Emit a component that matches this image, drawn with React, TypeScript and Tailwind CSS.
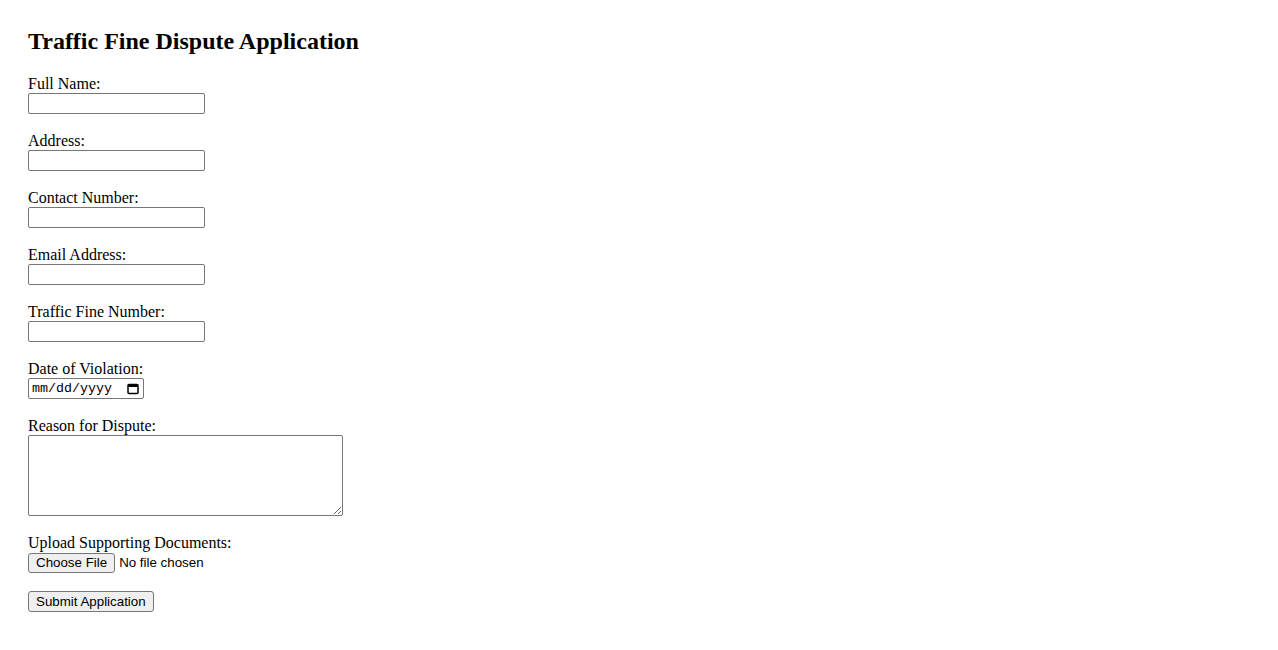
export default function App() {
  const fields = [
    { id: "fullName", label: "Full Name:" },
    { id: "address", label: "Address:" },
    { id: "contact", label: "Contact Number:" },
    { id: "email", label: "Email Address:" },
    { id: "fineNumber", label: "Traffic Fine Number:" },
  ];

  const control =
    "block border border-[#767676] rounded-[2px] bg-white px-[2px] py-px text-[13.33px] text-black font-['Liberation_Sans',Arial,sans-serif]";
  const button =
    "block border border-[#767676] rounded-[3px] bg-[#efefef] px-[7px] text-[13.33px] leading-[17px] text-black font-['Liberation_Sans',Arial,sans-serif]";

  return (
    <div className="min-h-[650px] bg-white px-[28px] pt-[27px] text-base text-black font-['Liberation_Serif','Times_New_Roman',serif]">
      <h2 className="mb-[20px] text-2xl leading-[28px] font-bold">Traffic Fine Dispute Application</h2>

      <form onSubmit={(e) => e.preventDefault()}>
        {fields.map((f) => (
          <div key={f.id} className="mb-[18px]">
            <label htmlFor={f.id} className="block leading-[18px]">
              {f.label}
            </label>
            <input id={f.id} type="text" className={`${control} h-[21px] w-[177px]`} />
          </div>
        ))}

        <div className="mb-[18px]">
          <label htmlFor="violationDate" className="block leading-[18px]">
            Date of Violation:
          </label>
          <div className="flex h-[21px] w-[116px] items-center justify-between rounded-[2px] border border-[#767676] bg-white pl-[3px] pr-[3px] text-[13.33px] font-['Liberation_Mono','Courier_New',monospace]">
            <span>mm/dd/yyyy</span>
            <svg width="14" height="14" viewBox="0 0 14 14" aria-hidden>
              <rect x="2" y="2.5" width="10" height="9" rx="1" fill="none" stroke="#000" strokeWidth="1.5" />
              <rect x="2" y="2.5" width="10" height="2.5" fill="#000" />
            </svg>
          </div>
        </div>

        <div className="mb-[17px]">
          <label htmlFor="reason" className="block leading-[18px]">
            Reason for Dispute:
          </label>
          <textarea
            id="reason"
            className={`${control} h-[81px] w-[315px] resize font-['Liberation_Mono','Courier_New',monospace]`}
          />
        </div>

        <div className="mb-[18px]">
          <label className="block leading-[20px]">Upload Supporting Documents:</label>
          <div className="flex items-center gap-[4px] text-[13.33px] font-['Liberation_Sans',Arial,sans-serif]">
            <span className={`${button} h-[20px]`}>Choose File</span>
            <span>No file chosen</span>
          </div>
        </div>

        <button type="submit" className={`${button} h-[21px]`}>
          Submit Application
        </button>
      </form>
    </div>
  );
}
